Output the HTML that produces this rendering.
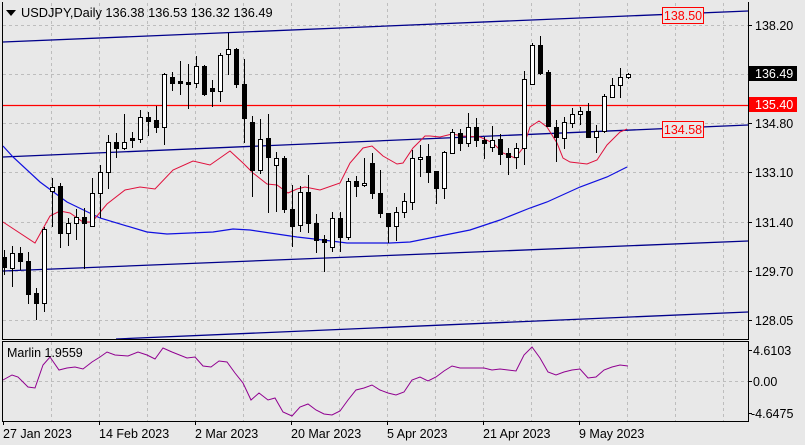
<!DOCTYPE html>
<html><head><meta charset="utf-8"><style>
html,body{margin:0;padding:0;background:#e8e8e8;}
svg{display:block;font-family:"Liberation Sans",sans-serif;}
</style></head><body>
<svg width="805" height="445" viewBox="0 0 805 445" xmlns="http://www.w3.org/2000/svg">
<rect width="805" height="445" fill="#e8e8e8"/>
<g stroke="#bdbdbd" stroke-dasharray="3,3" stroke-width="1" shape-rendering="crispEdges">
<path d="M51.5 3V339M99.5 3V339M147.5 3V339M195.5 3V339M243.5 3V339M291.5 3V339M339.5 3V339M387.5 3V339M435.5 3V339M483.5 3V339M531.5 3V339M579.5 3V339M627.5 3V339M675.5 3V339M723.5 3V339"/>
<path d="M51.5 342V421M99.5 342V421M147.5 342V421M195.5 342V421M243.5 342V421M291.5 342V421M339.5 342V421M387.5 342V421M435.5 342V421M483.5 342V421M531.5 342V421M579.5 342V421M627.5 342V421M675.5 342V421M723.5 342V421"/>
<path d="M3 25.5H748M3 74.5H748M3 123.5H748M3 172.5H748M3 222.5H748M3 271.5H748M3 320.5H748M3 381.5H748"/>
</g>
<g stroke="#00008b" stroke-width="1.3" fill="none">
<line x1="3" y1="42" x2="748" y2="11"/>
<line x1="3" y1="157" x2="748" y2="125"/>
<line x1="3" y1="271" x2="748" y2="241"/>
<line x1="116" y1="339" x2="748" y2="312"/>
</g>
<line x1="3" y1="105.5" x2="748" y2="105.5" stroke="#ff0000" stroke-width="1.2"/>
<polyline fill="none" stroke="#1010e0" stroke-width="1.2" points="3,146 13,157 40,182 67,202 100,218 147,232 167,234 213,232 233,229 250,230 297,237 323,240 347,243 390,243 410,242 430,238 470,230 500,220 530,208 547,202 580,187 607,177 627,167"/>
<polyline fill="none" stroke="#e0103c" stroke-width="1" points="3,222 35,243 50,216 60,211 70,213 83,222 92,222 107,204 125,190 140,187 155,189 173,170 193,161 210,165 230,151 243,163 253,173 267,184 277,185 288,193 297,189 305,187 320,190 340,183 350,163 363,148 372,146 383,156 397,164 403,163 413,148 425,136 430,136 440,137 452,134 463,136 480,137 493,143 503,153 515,158 523,148 530,127 539,121 547,127 557,143 563,158 570,162 587,164 597,160 607,145 620,132 627,129"/>
<g stroke="#000" stroke-width="1" shape-rendering="crispEdges">
<line x1="4.5" y1="250" x2="4.5" y2="275"/><rect x="2.5" y="257.5" width="4" height="10" fill="#000"/>
<line x1="12.5" y1="246" x2="12.5" y2="287"/><rect x="10.5" y="253.5" width="4" height="15" fill="#fff"/>
<line x1="20.5" y1="247" x2="20.5" y2="270"/><rect x="18.5" y="253.5" width="4" height="8" fill="#000"/>
<line x1="28.5" y1="252" x2="28.5" y2="304"/><rect x="26.5" y="261.5" width="4" height="33" fill="#000"/>
<line x1="36.5" y1="288" x2="36.5" y2="320"/><rect x="34.5" y="293.5" width="4" height="10" fill="#000"/>
<line x1="44.5" y1="227" x2="44.5" y2="312"/><rect x="42.5" y="229.5" width="4" height="74" fill="#fff"/>
<line x1="52.5" y1="178" x2="52.5" y2="227"/><rect x="50.5" y="187.5" width="4" height="4" fill="#fff"/>
<line x1="60.5" y1="183" x2="60.5" y2="248"/><rect x="58.5" y="186.5" width="4" height="47" fill="#000"/>
<line x1="68.5" y1="218" x2="68.5" y2="246"/><rect x="66.5" y="223.5" width="4" height="10" fill="#fff"/>
<line x1="76.5" y1="209" x2="76.5" y2="240"/><rect x="74.5" y="217.5" width="4" height="6" fill="#fff"/>
<line x1="84.5" y1="208" x2="84.5" y2="269"/><rect x="82.5" y="217.5" width="4" height="6" fill="#000"/>
<line x1="92.5" y1="178" x2="92.5" y2="227"/><rect x="90.5" y="193.5" width="4" height="33" fill="#fff"/>
<line x1="100.5" y1="165" x2="100.5" y2="218"/><rect x="98.5" y="172.5" width="4" height="21" fill="#fff"/>
<line x1="108.5" y1="135" x2="108.5" y2="189"/><rect x="106.5" y="142.5" width="4" height="30" fill="#fff"/>
<line x1="116.5" y1="133" x2="116.5" y2="158"/><rect x="114.5" y="142.5" width="4" height="6" fill="#000"/>
<line x1="124.5" y1="114" x2="124.5" y2="150"/><rect x="122.5" y="142.5" width="4" height="6" fill="#fff"/>
<line x1="132.5" y1="132" x2="132.5" y2="148"/><rect x="130.5" y="138.5" width="4" height="2" fill="#000"/>
<line x1="140.5" y1="110" x2="140.5" y2="143"/><rect x="138.5" y="117.5" width="4" height="22" fill="#fff"/>
<line x1="148.5" y1="112" x2="148.5" y2="136"/><rect x="146.5" y="117.5" width="4" height="4" fill="#000"/>
<line x1="156.5" y1="106" x2="156.5" y2="133"/><rect x="154.5" y="120.5" width="4" height="7" fill="#000"/>
<line x1="164.5" y1="73" x2="164.5" y2="145"/><rect x="162.5" y="74.5" width="4" height="53" fill="#fff"/>
<line x1="172.5" y1="72" x2="172.5" y2="91"/><rect x="170.5" y="77.5" width="4" height="6" fill="#000"/>
<line x1="180.5" y1="61" x2="180.5" y2="95"/><rect x="178.5" y="81.5" width="4" height="2" fill="#000"/>
<line x1="188.5" y1="64" x2="188.5" y2="109"/><rect x="186.5" y="82.5" width="4" height="2" fill="#000"/>
<line x1="196.5" y1="56" x2="196.5" y2="88"/><rect x="194.5" y="66.5" width="4" height="17" fill="#fff"/>
<line x1="204.5" y1="65" x2="204.5" y2="96"/><rect x="202.5" y="66.5" width="4" height="28" fill="#000"/>
<line x1="212.5" y1="80" x2="212.5" y2="107"/><rect x="210.5" y="88.5" width="4" height="3" fill="#000"/>
<line x1="220.5" y1="53" x2="220.5" y2="102"/><rect x="218.5" y="55.5" width="4" height="36" fill="#fff"/>
<line x1="228.5" y1="33" x2="228.5" y2="75"/><rect x="226.5" y="49.5" width="4" height="5" fill="#fff"/>
<line x1="236.5" y1="48" x2="236.5" y2="88"/><rect x="234.5" y="49.5" width="4" height="35" fill="#000"/>
<line x1="244.5" y1="59" x2="244.5" y2="143"/><rect x="242.5" y="84.5" width="4" height="34" fill="#000"/>
<line x1="252.5" y1="116" x2="252.5" y2="197"/><rect x="250.5" y="122.5" width="4" height="48" fill="#000"/>
<line x1="260.5" y1="119" x2="260.5" y2="174"/><rect x="258.5" y="139.5" width="4" height="31" fill="#fff"/>
<line x1="268.5" y1="114" x2="268.5" y2="213"/><rect x="266.5" y="138.5" width="4" height="19" fill="#000"/>
<line x1="276.5" y1="152" x2="276.5" y2="212"/><rect x="274.5" y="158.5" width="4" height="7" fill="#fff"/>
<line x1="284.5" y1="156" x2="284.5" y2="213"/><rect x="282.5" y="158.5" width="4" height="51" fill="#000"/>
<line x1="292.5" y1="185" x2="292.5" y2="247"/><rect x="290.5" y="209.5" width="4" height="17" fill="#000"/>
<line x1="300.5" y1="186" x2="300.5" y2="232"/><rect x="298.5" y="192.5" width="4" height="33" fill="#fff"/>
<line x1="308.5" y1="175" x2="308.5" y2="233"/><rect x="306.5" y="192.5" width="4" height="31" fill="#000"/>
<line x1="316.5" y1="214" x2="316.5" y2="253"/><rect x="314.5" y="223.5" width="4" height="17" fill="#000"/>
<line x1="324.5" y1="235" x2="324.5" y2="272"/><rect x="322.5" y="239.5" width="4" height="3" fill="#000"/>
<line x1="332.5" y1="212" x2="332.5" y2="252"/><rect x="330.5" y="218.5" width="4" height="29" fill="#fff"/>
<line x1="340.5" y1="212" x2="340.5" y2="252"/><rect x="338.5" y="218.5" width="4" height="19" fill="#000"/>
<line x1="348.5" y1="178" x2="348.5" y2="240"/><rect x="346.5" y="181.5" width="4" height="56" fill="#fff"/>
<line x1="356.5" y1="176" x2="356.5" y2="197"/><rect x="354.5" y="181.5" width="4" height="5" fill="#000"/>
<line x1="364.5" y1="158" x2="364.5" y2="187"/><rect x="362.5" y="183.5" width="4" height="2" fill="#fff"/>
<line x1="372.5" y1="153" x2="372.5" y2="199"/><rect x="370.5" y="163.5" width="4" height="30" fill="#000"/>
<line x1="380.5" y1="170" x2="380.5" y2="218"/><rect x="378.5" y="193.5" width="4" height="20" fill="#000"/>
<line x1="388.5" y1="213" x2="388.5" y2="243"/><rect x="386.5" y="213.5" width="4" height="13" fill="#000"/>
<line x1="396.5" y1="207" x2="396.5" y2="241"/><rect x="394.5" y="212.5" width="4" height="14" fill="#fff"/>
<line x1="404.5" y1="193" x2="404.5" y2="218"/><rect x="402.5" y="201.5" width="4" height="11" fill="#fff"/>
<line x1="412.5" y1="150" x2="412.5" y2="210"/><rect x="410.5" y="158.5" width="4" height="44" fill="#fff"/>
<line x1="420.5" y1="145" x2="420.5" y2="177"/><rect x="418.5" y="157.5" width="4" height="2" fill="#fff"/>
<line x1="428.5" y1="144" x2="428.5" y2="183"/><rect x="426.5" y="156.5" width="4" height="16" fill="#000"/>
<line x1="436.5" y1="171" x2="436.5" y2="204"/><rect x="434.5" y="171.5" width="4" height="17" fill="#000"/>
<line x1="444.5" y1="151" x2="444.5" y2="199"/><rect x="442.5" y="152.5" width="4" height="36" fill="#fff"/>
<line x1="452.5" y1="129" x2="452.5" y2="154"/><rect x="450.5" y="132.5" width="4" height="21" fill="#fff"/>
<line x1="460.5" y1="129" x2="460.5" y2="151"/><rect x="458.5" y="133.5" width="4" height="10" fill="#000"/>
<line x1="468.5" y1="113" x2="468.5" y2="147"/><rect x="466.5" y="127.5" width="4" height="16" fill="#fff"/>
<line x1="476.5" y1="118" x2="476.5" y2="147"/><rect x="474.5" y="127.5" width="4" height="13" fill="#000"/>
<line x1="484.5" y1="137" x2="484.5" y2="159"/><rect x="482.5" y="140.5" width="4" height="3" fill="#000"/>
<line x1="492.5" y1="126" x2="492.5" y2="152"/><rect x="490.5" y="140.5" width="4" height="7" fill="#fff"/>
<line x1="500.5" y1="134" x2="500.5" y2="165"/><rect x="498.5" y="139.5" width="4" height="15" fill="#000"/>
<line x1="508.5" y1="148" x2="508.5" y2="175"/><rect x="506.5" y="153.5" width="4" height="4" fill="#000"/>
<line x1="516.5" y1="143" x2="516.5" y2="169"/><rect x="514.5" y="148.5" width="4" height="9" fill="#fff"/>
<line x1="524.5" y1="71" x2="524.5" y2="165"/><rect x="522.5" y="79.5" width="4" height="69" fill="#fff"/>
<line x1="532.5" y1="43" x2="532.5" y2="85"/><rect x="530.5" y="45.5" width="4" height="39" fill="#fff"/>
<line x1="540.5" y1="36" x2="540.5" y2="75"/><rect x="538.5" y="45.5" width="4" height="28" fill="#000"/>
<line x1="548.5" y1="70" x2="548.5" y2="127"/><rect x="546.5" y="72.5" width="4" height="54" fill="#000"/>
<line x1="556.5" y1="120" x2="556.5" y2="162"/><rect x="554.5" y="127.5" width="4" height="10" fill="#000"/>
<line x1="564.5" y1="117" x2="564.5" y2="149"/><rect x="562.5" y="122.5" width="4" height="16" fill="#fff"/>
<line x1="572.5" y1="108" x2="572.5" y2="128"/><rect x="570.5" y="114.5" width="4" height="9" fill="#fff"/>
<line x1="580.5" y1="107" x2="580.5" y2="125"/><rect x="578.5" y="111.5" width="4" height="3" fill="#fff"/>
<line x1="588.5" y1="103" x2="588.5" y2="137"/><rect x="586.5" y="111.5" width="4" height="26" fill="#000"/>
<line x1="596.5" y1="125" x2="596.5" y2="153"/><rect x="594.5" y="131.5" width="4" height="6" fill="#fff"/>
<line x1="604.5" y1="94" x2="604.5" y2="133"/><rect x="602.5" y="96.5" width="4" height="35" fill="#fff"/>
<line x1="612.5" y1="78" x2="612.5" y2="98"/><rect x="610.5" y="85.5" width="4" height="12" fill="#fff"/>
<line x1="620.5" y1="68" x2="620.5" y2="98"/><rect x="618.5" y="77.5" width="4" height="8" fill="#fff"/>
<line x1="628.5" y1="73" x2="628.5" y2="79"/><rect x="626.5" y="74.5" width="4" height="3" fill="#fff"/>
</g>
<rect x="662.5" y="7.5" width="41" height="16" fill="#e8e8e8" stroke="#ff0000"/>
<text x="683" y="20" font-size="12.5" fill="#ff0000" text-anchor="middle">138.50</text>
<rect x="662.5" y="121.5" width="41" height="16" fill="#e8e8e8" stroke="#ff0000"/>
<text x="683" y="134" font-size="12.5" fill="#ff0000" text-anchor="middle">134.58</text>
<polyline fill="none" stroke="#900090" stroke-width="1" points="3,380 12,375 18,377 28,387 35,388 43,365 50,357 59,370 67,368 75,367 83,369 92,362 100,357 107,352 115,355 128,356 138,352 147,355 155,359 163,348 172,352 187,358 195,357 203,366 211,367 219,361 227,362 235,373 243,383 251,400 259,393 268,400 275,398 283,412 292,416 300,407 308,404 316,410 324,414 332,415 340,411 348,400 356,390 364,388 372,385 380,390 388,393 396,395 404,392 412,380 420,377 428,381 436,377 444,371 452,366 460,368 468,368 476,368 484,368 492,370 500,369 508,370 516,371 524,355 532,347 540,358 548,372 556,375 564,372 572,370 580,369 588,378 596,377 604,370 612,367 620,365 628,366"/>
<text x="7" y="357" font-size="12.5" fill="#000">Marlin 1.9559</text>
<g fill="none" stroke="#000" stroke-width="1" shape-rendering="crispEdges">
<path d="M2.5 2V339.5H748.5V2"/>
<rect x="2.5" y="341.5" width="746" height="80"/>
</g>
<path d="M6 10h10l-5 6z" fill="#000"/>
<text x="21" y="17" font-size="12.8" fill="#000">USDJPY,Daily  136.38 136.53 136.32 136.49</text>
<g font-size="12.5" fill="#000">
<path d="M748 25.5h4M748 123.5h4M748 172.5h4M748 222.5h4M748 271.5h4M748 320.5h4M748 350.5h4M748 381.5h4M748 413.5h4" stroke="#000"/>
<text x="755" y="30">138.20</text>
<text x="755" y="128">134.80</text>
<text x="755" y="177">133.10</text>
<text x="755" y="227">131.40</text>
<text x="755" y="276">129.70</text>
<text x="755" y="325">128.05</text>
<text x="753" y="355">4.6103</text>
<text x="753" y="386">0.00</text>
<text x="751" y="418">-4.6475</text>
</g>
<rect x="749" y="66" width="48" height="15" fill="#000"/>
<text x="755" y="78" font-size="12.5" fill="#fff">136.49</text>
<rect x="749" y="97" width="48" height="15" fill="#ff0000"/>
<text x="755" y="109" font-size="12.5" fill="#fff">135.40</text>
<g font-size="12.5" fill="#000">
<path d="M3.5 421v4M99.5 421v4M195.5 421v4M291.5 421v4M387.5 421v4M483.5 421v4M579.5 421v4" stroke="#000"/>
<text x="3" y="438">27 Jan 2023</text>
<text x="99" y="438">14 Feb 2023</text>
<text x="195" y="438">2 Mar 2023</text>
<text x="291" y="438">20 Mar 2023</text>
<text x="387" y="438">5 Apr 2023</text>
<text x="483" y="438">21 Apr 2023</text>
<text x="579" y="438">9 May 2023</text>
</g>
</svg>
</body></html>
